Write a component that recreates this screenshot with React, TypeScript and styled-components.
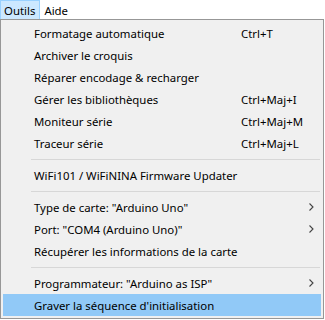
import { createGlobalStyle, styled } from 'styled-components'

const GlobalStyle = createGlobalStyle`
  html, body {
    margin: 0;
    padding: 0;
    background: #ffffff;
  }
  body {
    font-family: 'Noto Sans', 'Open Sans', sans-serif;
    font-size: 11.4px;
    color: #000000;
  }
`

type Entry =
  | { kind: 'item'; label: string; shortcut?: string; submenu?: boolean; active?: boolean }
  | { kind: 'sep' }

const entries: Entry[] = [
  { kind: 'item', label: 'Formatage automatique', shortcut: 'Ctrl+T' },
  { kind: 'item', label: 'Archiver le croquis' },
  { kind: 'item', label: 'Réparer encodage & recharger' },
  { kind: 'item', label: 'Gérer les bibliothèques', shortcut: 'Ctrl+Maj+I' },
  { kind: 'item', label: 'Moniteur série', shortcut: 'Ctrl+Maj+M' },
  { kind: 'item', label: 'Traceur série', shortcut: 'Ctrl+Maj+L' },
  { kind: 'sep' },
  { kind: 'item', label: 'WiFi101 / WiFiNINA Firmware Updater' },
  { kind: 'sep' },
  { kind: 'item', label: 'Type de carte: "Arduino Uno"', submenu: true },
  { kind: 'item', label: 'Port: "COM4 (Arduino Uno)"', submenu: true },
  { kind: 'item', label: 'Récupérer les informations de la carte' },
  { kind: 'sep' },
  { kind: 'item', label: 'Programmateur: "Arduino as ISP"', submenu: true },
  { kind: 'item', label: "Graver la séquence d'initialisation", active: true },
]

const Chevron = () => (
  <svg width="5" height="8" viewBox="0 0 5 8">
    <path d="M0.5 0.5 L4 4 L0.5 7.5" fill="none" stroke="#444" strokeWidth="1.1" />
  </svg>
)

const App = () => {
  return (
    <Page>
      <GlobalStyle />
      <MenuBar>
        <BarItem $open>{'Outils'}</BarItem>
        <BarItem>{'Aide'}</BarItem>
      </MenuBar>
      <Popup>
        {entries.map((e, i) =>
          e.kind === 'sep' ? (
            <Separator key={i} />
          ) : (
            <Item key={i} $active={e.active}>
              <Label>{e.label}</Label>
              <Shortcut>{e.shortcut}</Shortcut>
              <Arrow>{e.submenu && <Chevron />}</Arrow>
            </Item>
          ),
        )}
      </Popup>
    </Page>
  )
}

export default App

const Page = styled.div`
  width: 325px;
  height: 320px;
  display: flex;
  flex-direction: column;
  overflow: hidden;
`

const MenuBar = styled.div`
  height: 19px;
  display: flex;
  align-items: stretch;
  background: #ffffff;
`

const BarItem = styled.div<{ $open?: boolean }>`
  display: flex;
  align-items: center;
  padding: 0 4px 0 3px;
  box-sizing: border-box;
  border: 1px solid ${({ $open }) => ($open ? '#99d1ff' : 'transparent')};
  border-bottom: none;
  background: ${({ $open }) => ($open ? '#cce8ff' : 'transparent')};
  line-height: 17px;
`

const Popup = styled.div`
  width: 324px;
  box-sizing: border-box;
  border: 1px solid #979797;
  background: #f0f0f0;
  padding: 2px;
  display: flex;
  flex-direction: column;
`

const Item = styled.div<{ $active?: boolean }>`
  height: 22px;
  display: grid;
  grid-template-columns: 1fr 68px 12px;
  align-items: center;
  padding-left: 31px;
  background: ${({ $active }) => ($active ? '#91c9f7' : 'transparent')};
`

const Label = styled.span`
  white-space: nowrap;
`

const Shortcut = styled.span`
  white-space: nowrap;
`

const Arrow = styled.span`
  display: flex;
  align-items: center;
`

const Separator = styled.div`
  height: 10px;
  display: flex;
  align-items: center;
  padding-left: 28px;
  padding-right: 1px;
  &::after {
    content: '';
    flex: 1;
    height: 1px;
    background: #d7d7d7;
  }
`
